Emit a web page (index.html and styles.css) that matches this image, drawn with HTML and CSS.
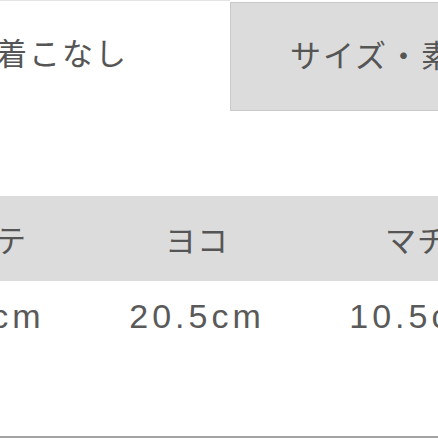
FILE: index.html
```html
<!DOCTYPE html>
<html lang="ja">
<head>
    <meta charset="UTF-8">
    <meta name="viewport" content="width=device-width, initial-scale=1.0">
    <title>サイズ</title>
    <link rel="stylesheet" href="styles.css">
</head>
<body>
    <div class="page">
        <div class="tabs">
            <div class="tab active">着こなし</div>
            <div class="tab">サイズ・素材</div>
        </div>

        <table class="size-table">
            <colgroup>
                <col class="col-tate">
                <col class="col-yoko">
                <col class="col-machi">
            </colgroup>
            <thead>
                <tr>
                    <th>タテ</th>
                    <th>ヨコ</th>
                    <th>マチ</th>
                </tr>
            </thead>
            <tbody>
                <tr>
                    <td>15cm</td>
                    <td>20.5cm</td>
                    <td>10.5cm</td>
                </tr>
            </tbody>
        </table>

        <div class="bottom-line"></div>
    </div>
</body>
</html>
```

FILE: styles.css
```css
body {
    margin: 0;
    background-color: #ffffff;
    color: #555555;
    font-family: 'Noto Sans CJK JP', 'Liberation Sans', sans-serif;
    overflow: hidden;
}
.page {
    width: 438px;
    height: 438px;
    overflow: hidden;
    display: flex;
    flex-direction: column;
}
.tabs {
    display: flex;
    margin-left: -66px;
    height: 111px;
    flex-shrink: 0;
}
.tab {
    width: 334px;
    flex-shrink: 0;
    box-sizing: border-box;
    padding-left: 59px;
    white-space: nowrap;
    font-size: 31px;
    letter-spacing: 2px;
    line-height: 102px;
    background-color: #dcdcdc;
    border: 1px solid #c9c9c9;
    margin-top: 2px;
}
.tab.active {
    width: 296px;
    padding-left: 62px;
    background-color: #ffffff;
    border: none;
    border-top: 1px solid #e4e4e4;
    margin-top: 0;
    line-height: 102px;
}
.size-table {
    margin-top: 85px;
    margin-left: -106px;
    width: 642px;
    flex-shrink: 0;
    border-collapse: collapse;
    table-layout: fixed;
}
.col-tate,
.col-yoko {
    width: 202px;
}
.col-machi {
    width: 238px;
}
.size-table th {
    background-color: #dcdcdc;
    font-weight: normal;
    font-size: 31px;
    letter-spacing: 1px;
    height: 85px;
    padding: 0;
    text-align: center;
}
.size-table td {
    font-family: 'Liberation Sans', 'Noto Sans CJK JP', sans-serif;
    color: #5a5a5a;
    font-size: 34px;
    letter-spacing: 4px;
    height: 70px;
    padding: 0;
    text-align: center;
}
.bottom-line {
    margin-top: auto;
    height: 2px;
    background-color: #a3a3a3;
    flex-shrink: 0;
}
```
